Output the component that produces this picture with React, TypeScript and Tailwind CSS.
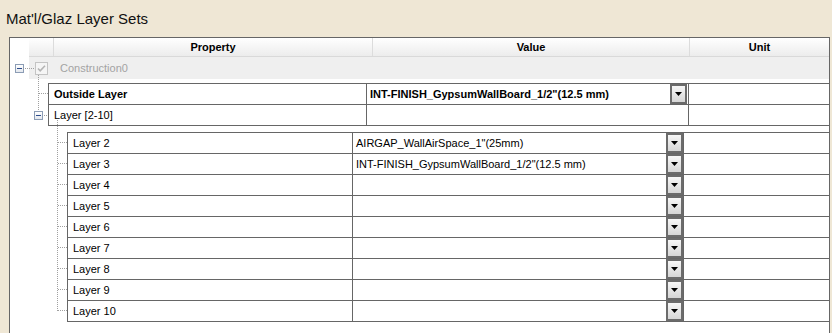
import React from "react"

const nested = [
  { name: "Layer 2", value: "AIRGAP_WallAirSpace_1\"(25mm)" },
  { name: "Layer 3", value: "INT-FINISH_GypsumWallBoard_1/2\"(12.5 mm)" },
  { name: "Layer 4", value: "" },
  { name: "Layer 5", value: "" },
  { name: "Layer 6", value: "" },
  { name: "Layer 7", value: "" },
  { name: "Layer 8", value: "" },
  { name: "Layer 9", value: "" },
  { name: "Layer 10", value: "" },
]

function DropBtn() {
  return (
    <div className="w-[17px] h-full shrink-0 border-2 border-[#6b6b6b] bg-gradient-to-b from-[#f7f7f7] to-[#d6d6d6] flex items-center justify-center">
      <svg width="7" height="4" viewBox="0 0 7 4">
        <path d="M0 0h7L3.5 4z" fill="#000" />
      </svg>
    </div>
  )
}

function Expander() {
  return (
    <div className="w-[9px] h-[9px] border border-[#8c9db5] bg-gradient-to-b from-white to-[#e4e8ee] flex items-center justify-center">
      <div className="w-[5px] h-[1px] bg-[#2c4c8c]" />
    </div>
  )
}

// dotted tree connectors, drawn over the grid
function TreeLines() {
  const c = "#a0a0a0"
  const ys = nested.map((_, i) => 104.5 + 21 * i)
  return (
    <svg className="absolute left-0 top-0 pointer-events-none" width="80" height="300">
      <g stroke={c} strokeWidth="1" strokeDasharray="1 1" shapeRendering="crispEdges">
        <line x1="13" y1="30.5" x2="24" y2="30.5" />
        <line x1="28.5" y1="37" x2="28.5" y2="73" />
        <line x1="29" y1="55.5" x2="38" y2="55.5" />
        <line x1="34" y1="77.5" x2="38" y2="77.5" />
        <line x1="47.5" y1="82" x2="47.5" y2={ys[ys.length - 1]} />
        {ys.map((y) => (
          <line key={y} x1="48" y1={y} x2="57" y2={y} />
        ))}
      </g>
    </svg>
  )
}

export default function App() {
  return (
    <div className="w-[832px] h-[333px] overflow-hidden bg-[#efe7d5] flex flex-col font-['Liberation_Sans',Arial,sans-serif] text-[11px] text-black">
      <div className="h-[37px] pt-[10px] pl-[6px] text-[15px] leading-[17px] text-[#111]">Mat'l/Glaz Layer Sets</div>

      <div className="relative ml-[9px] w-[821px] flex-1 border-l border-t border-r border-[#666] bg-white">
        <TreeLines />

        {/* Header */}
        <div className="ml-[19px] h-[19px] flex border-b border-[#d9d9d9] bg-gradient-to-b from-white to-[#ececec] font-bold">
          <div className="w-[25px] border-r border-[#dcdcdc]" />
          <div className="w-[319px] border-r border-[#dcdcdc] flex items-center justify-center">Property</div>
          <div className="w-[317px] border-r border-[#dcdcdc] flex items-center justify-center">Value</div>
          <div className="flex-1 flex items-center justify-center">Unit</div>
        </div>

        {/* Construction0 */}
        <div className="flex h-[22px]">
          <div className="w-[19px] flex items-center pl-[5px]">
            <Expander />
          </div>
          <div className="flex-1 bg-[#efefef] flex items-center pl-[6px]">
            <div className="w-[13px] h-[13px] border border-[#c4c4c4] bg-[#f5f5f5] flex items-center justify-center">
              <svg width="9" height="9" viewBox="0 0 9 9">
                <path d="M1 4.5l2.2 2.3L8 1.8" fill="none" stroke="#b4b4b4" strokeWidth="1.6" />
              </svg>
            </div>
            <span className="ml-[12px] text-[#a3a3a3]">Construction0</span>
          </div>
        </div>

        {/* Outside layer + Layer [2-10] */}
        <div className="flex mt-[4px]">
          <div className="w-[38px] pl-[24px] pt-[28px]">
            <Expander />
          </div>
          <div className="flex-1 border-l border-t border-[#666]">
            <div className="flex h-[21px] border-b border-[#666]">
              <div className="w-[318px] pl-[5px] flex items-center font-bold border-r border-[#666]">Outside Layer</div>
              <div className="w-[322px] flex items-center border-r border-[#666]">
                <span className="flex-1 pl-[3px] font-bold">INT-FINISH_GypsumWallBoard_1/2"(12.5 mm)</span>
                <DropBtn />
                <div className="w-[1px]" />
              </div>
              <div className="flex-1" />
            </div>
            <div className="flex h-[21px] border-b border-[#666]">
              <div className="w-[318px] pl-[5px] flex items-center border-r border-[#666]">Layer [2-10]</div>
              <div className="w-[322px] border-r border-[#666]" />
              <div className="flex-1" />
            </div>
          </div>
        </div>

        {/* Nested layers */}
        <div className="ml-[57px] mt-[6px] border-l border-t border-[#666]">
          {nested.map((r) => (
            <div key={r.name} className="flex h-[21px] border-b border-[#666]">
              <div className="w-[285px] pl-[5px] flex items-center border-r border-[#666]">{r.name}</div>
              <div className="w-[331px] flex items-center border-r border-[#666]">
                <span className="flex-1 pl-[3px] whitespace-nowrap overflow-hidden">{r.value}</span>
                <DropBtn />
              </div>
              <div className="flex-1" />
            </div>
          ))}
        </div>
      </div>
    </div>
  )
}
